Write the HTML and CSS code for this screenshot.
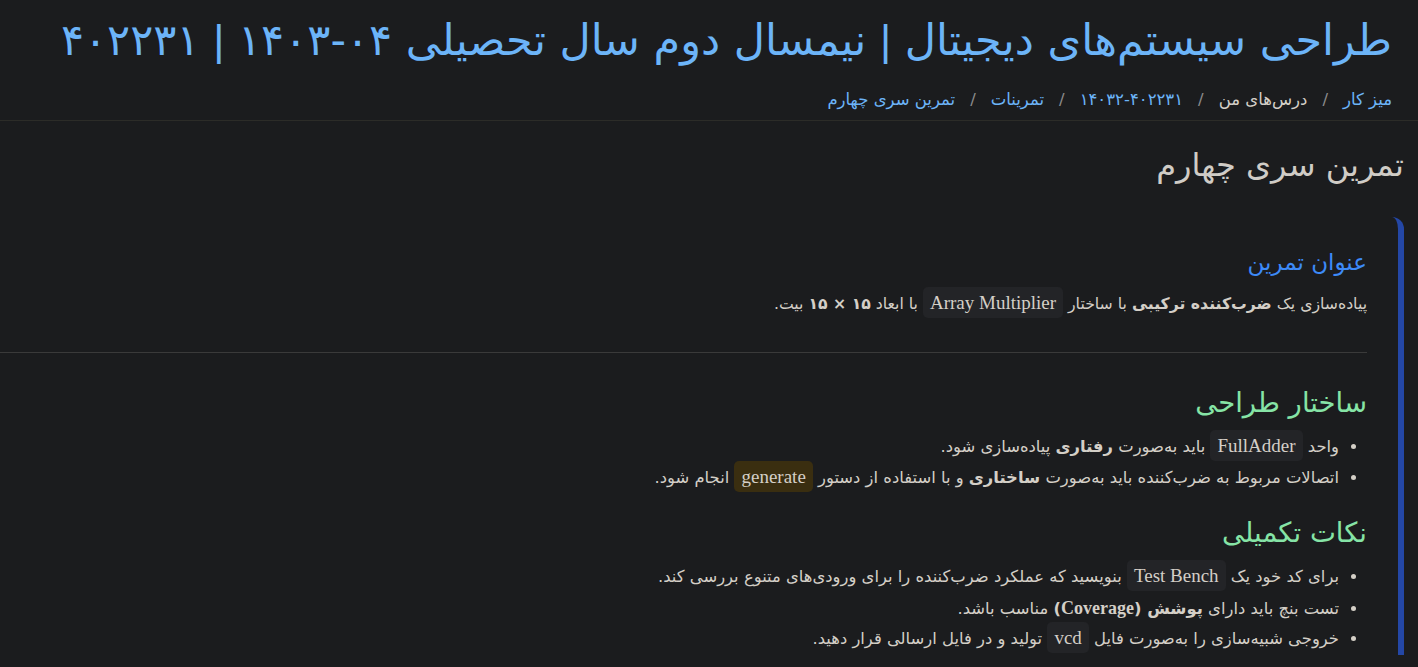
FILE: index.html
```html
<!DOCTYPE html>
<html lang="fa" dir="rtl">
<head>
<meta charset="utf-8">
<title>تمرین سری چهارم</title>
<link rel="stylesheet" href="styles.css">
</head>
<body>
<header class="top">
  <h1 class="course-title">طراحی سیستم‌های دیجیتال <span class="bar">|</span> نیمسال دوم سال تحصیلی <bdi dir="ltr">۱۴۰۳-۰۴</bdi> <span class="bar">|</span> ۴۰۲۲۳۱</h1>
  <nav class="crumbs">
    <a class="crumb-link" href="#">میز کار</a>
    <span class="sep">/</span>
    <span class="crumb-text">درس‌های من</span>
    <span class="sep">/</span>
    <a class="crumb-link" href="#"><bdi dir="ltr">۱۴۰۳۲-۴۰۲۲۳۱</bdi></a>
    <span class="sep">/</span>
    <a class="crumb-link" href="#">تمرینات</a>
    <span class="sep">/</span>
    <a class="crumb-link" href="#">تمرین سری چهارم</a>
  </nav>
</header>
<main class="page">
  <h2 class="page-title">تمرین سری چهارم</h2>
  <section class="box">
    <h3 class="box-title">عنوان تمرین</h3>
    <p class="para">پیاده‌سازی یک <b>ضرب‌کننده ترکیبی</b> با ساختار <code class="code">Array Multiplier</code> با ابعاد <b>۱۵ × ۱۵</b> بیت.</p>
    <hr class="rule">
    <h3 class="sec">ساختار طراحی</h3>
    <ul class="list">
      <li>واحد <code class="code">FullAdder</code> باید به‌صورت <b>رفتاری</b> پیاده‌سازی شود.</li>
      <li>اتصالات مربوط به ضرب‌کننده باید به‌صورت <b>ساختاری</b> و با استفاده از دستور <code class="code code-warn">generate</code> انجام شود.</li>
    </ul>
    <h3 class="sec">نکات تکمیلی</h3>
    <ul class="list">
      <li>برای کد خود یک <code class="code">Test Bench</code> بنویسید که عملکرد ضرب‌کننده را برای ورودی‌های متنوع بررسی کند.</li>
      <li>تست بنچ باید دارای <b>پوشش (<span class="latin">Coverage</span>)</b> مناسب باشد.</li>
      <li>خروجی شبیه‌سازی را به‌صورت فایل <code class="code">vcd</code> تولید و در فایل ارسالی قرار دهید.</li>
    </ul>
  </section>
</main>
</body>
</html>
```

FILE: styles.css
```css
html, body {
  margin: 0;
  padding: 0;
  background: #1b1c1e;
  color: #d4cfc7;
  font-family: "DejaVu Sans", "Noto Sans", sans-serif;
}

.top {
  padding: 16px 26px 8px;
  border-bottom: 1px solid #2c2c28;
}

.course-title {
  margin: 0;
  font-size: 43px;
  line-height: 48px;
  font-weight: normal;
  color: #6cb4f8;
  white-space: nowrap;
}

.bar {
  font-family: "Liberation Sans", sans-serif;
  font-weight: 300;
}

.crumbs {
  margin-top: 24px;
  font-size: 16.5px;
  line-height: 24px;
  display: flex;
  gap: 15px;
  align-items: center;
}

.crumb-link {
  color: #6cb4f8;
  text-decoration: none;
}

.crumb-text {
  color: #d4cfc7;
}

.sep {
  color: #8a8a8a;
}

.page {
  padding: 24px 14px 0 0;
}

.page-title {
  margin: 0;
  font-size: 32px;
  line-height: 40px;
  font-weight: normal;
  color: #d0ccc6;
}

.box {
  margin-top: 32px;
  padding: 29px 31px 0 0;
  border-right: 6px solid #2447a6;
  border-top-right-radius: 12px;
}

.box-title {
  margin: 0;
  font-size: 23px;
  line-height: 32px;
  font-weight: normal;
  color: #3d8af7;
}

.para {
  margin: 11px 0 0;
  font-size: 15.7px;
  line-height: 30px;
}

.rule {
  margin: 33px 0 0;
  border: 0;
  border-top: 1px solid #3a3a3a;
  height: 0;
}

.sec {
  margin: 31px 0 0;
  font-size: 27.5px;
  line-height: 36px;
  font-weight: normal;
  color: #86e4a6;
}

.list {
  margin: 12px 0 0;
  padding: 0 28px 0 0;
  font-size: 16.4px;
  line-height: 30.5px;
}

.list + .sec {
  margin-top: 21px;
}

b {
  font-weight: bold;
}

.code {
  font-family: "Liberation Serif", serif;
  font-size: 19px;
  line-height: 1;
  background: #232427;
  border-radius: 5px;
  padding: 5px 7px;
  color: #d4cfc7;
}

.code-warn {
  background: #3a2e10;
}

.latin {
  font-family: "Liberation Serif", serif;
  font-size: 18px;
}
```
